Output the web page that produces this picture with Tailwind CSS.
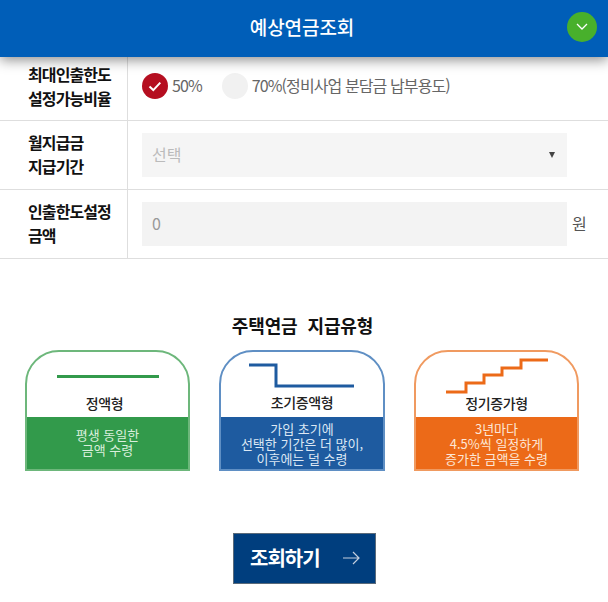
<!DOCTYPE html>
<html lang="ko">
<head>
  <meta charset="UTF-8" />
  <title>예상연금조회</title>
  <meta name="viewport" content="width=device-width, initial-scale=1" />
  <script src="https://cdn.jsdelivr.net/npm/@tailwindcss/browser@4"></script>
</head>
<body class="bg-white font-['Noto_Sans_CJK_KR','Noto_Sans',sans-serif] w-[608px] h-[602px] overflow-hidden">
  <!-- header -->
  <header class="relative z-10 h-[57px] bg-[#005eb8] flex items-center justify-center shadow-[0_3px_12px_rgba(0,0,0,0.45)]">
    <h1 class="text-white text-[19px] font-medium tracking-[-0.1px] pr-[4px] pb-[3px]">예상연금조회</h1>
    <button class="absolute left-[567px] top-[12px] w-[30px] h-[30px] rounded-full bg-[#48b02c] flex items-center justify-center">
      <svg width="12" height="8" viewBox="0 0 12 8" fill="none" stroke="#fff" stroke-width="1.3"><path d="M1 1l5 5 5-5" /></svg>
    </button>
  </header>

  <!-- form rows -->
  <div class="-mt-[5px]">
    <div class="flex h-[69px] border-b border-[#dedede]">
      <div class="w-[128px] shrink-0 border-r border-[#dedede] pl-[28px] pb-[1px] flex flex-col justify-center text-[16px] leading-[24px] font-bold text-[#111] tracking-[-0.9px]">
        <span>최대인출한도</span>
        <span>설정가능비율</span>
      </div>
      <div class="flex items-center pl-[14px] text-[16px] text-[#666] tracking-[-0.9px]">
        <span class="w-[26px] h-[26px] rounded-full bg-[#b50e20] flex items-center justify-center">
          <svg width="14" height="11" viewBox="0 0 14 11" fill="none" stroke="#fff" stroke-width="2"><path d="M1.5 5.5l3.8 3.6 7-7.5" /></svg>
        </span>
        <span class="ml-[4px] pb-[2px]">50%</span>
        <span class="ml-[20px] w-[26px] h-[26px] rounded-full bg-[#f1f1f1]"></span>
        <span class="ml-[4px] pb-[2px]">70%(정비사업 분담금 납부용도)</span>
      </div>
    </div>

    <div class="flex h-[69px] border-b border-[#dedede]">
      <div class="w-[128px] shrink-0 border-r border-[#dedede] pl-[28px] pb-[2px] flex flex-col justify-center text-[16px] leading-[24px] font-bold text-[#111] tracking-[-0.9px]">
        <span>월지급금</span>
        <span>지급기간</span>
      </div>
      <div class="flex items-center pl-[14px]">
        <div class="w-[425px] h-[44px] bg-[#f5f5f5] flex items-center justify-between pl-[10px] pr-[12px] text-[16px] text-[#bbb]">
          <span class="pb-[2px]">선택</span>
          <span class="w-0 h-0 border-x-[3px] border-x-transparent border-t-[6px] border-t-[#444]"></span>
        </div>
      </div>
    </div>

    <div class="flex h-[69px] border-b border-[#dedede]">
      <div class="w-[128px] shrink-0 border-r border-[#dedede] pl-[28px] pb-[2px] flex flex-col justify-center text-[16px] leading-[24px] font-bold text-[#111] tracking-[-0.9px]">
        <span>인출한도설정</span>
        <span>금액</span>
      </div>
      <div class="flex items-center pl-[14px]">
        <div class="w-[425px] h-[44px] bg-[#f3f3f3] flex items-center pl-[10px] pb-[2px] text-[16px] text-[#999]">0</div>
        <span class="ml-[5px] pb-[2px] text-[16px] text-[#555]">원</span>
      </div>
    </div>
  </div>

  <!-- pension types -->
  <h2 class="mt-[54px] text-center text-[18px] leading-[24px] font-bold text-[#111] tracking-[-0.1px] pr-[3px]">주택연금&nbsp; 지급유형</h2>

  <div class="mt-[13px] flex pl-[25px] gap-[29px]">
    <div class="w-[165px] h-[121px] flex flex-col rounded-t-[34px] border-2 border-[#6db77b] overflow-hidden">
      <div class="h-[65px] flex flex-col items-center">
        <svg class="mt-[17px]" width="104" height="16" viewBox="0 0 104 16" fill="none" stroke="#329a4b" stroke-width="3"><path d="M1 7.5h102" /></svg>
        <span class="mt-[8px] pr-[6px] text-[14px] leading-[20px] font-medium text-[#222] tracking-[-0.4px]">정액형</span>
      </div>
      <div class="flex-1 bg-[#329a4b] text-[#d9efdc] text-[13px] leading-[15px] text-center flex flex-col items-center justify-center pb-[3px]">
        <span>평생 동일한</span>
        <span>금액 수령</span>
      </div>
    </div>

    <div class="w-[166px] h-[121px] flex flex-col rounded-t-[34px] border-2 border-[#5f8fc4] overflow-hidden">
      <div class="h-[65px] flex flex-col items-center">
        <svg class="mt-[11px]" width="108" height="26" viewBox="0 0 108 26" fill="none" stroke="#1e5ba0" stroke-width="3"><path d="M1 2h27v21h78" /></svg>
        <span class="mt-[3px] text-[14px] leading-[20px] font-medium text-[#222] tracking-[-0.4px]">초기증액형</span>
      </div>
      <div class="flex-1 bg-[#1e5ba0] text-[#dce8f4] text-[13px] leading-[15px] text-center flex flex-col items-center justify-center">
        <span>가입 초기에</span>
        <span>선택한 기간은 더 많이,</span>
        <span>이후에는 덜 수령</span>
      </div>
    </div>

    <div class="w-[165px] h-[121px] flex flex-col rounded-t-[34px] border-2 border-[#f09a60] overflow-hidden">
      <div class="h-[65px] flex flex-col items-center">
        <svg class="mt-[6px]" width="104" height="36" viewBox="0 0 104 36" fill="none" stroke="#ec6a18" stroke-width="3"><path d="M1 34h20v-9h18v-8h18v-7h19v-8h27" /></svg>
        <span class="-mt-[1px] text-[14px] leading-[20px] font-medium text-[#222] tracking-[-0.4px]">정기증가형</span>
      </div>
      <div class="flex-1 bg-[#ec6a18] text-[#fde6d6] text-[13px] leading-[15px] text-center flex flex-col items-center justify-center">
        <span>3년마다</span>
        <span>4.5%씩 일정하게</span>
        <span>증가한 금액을 수령</span>
      </div>
    </div>
  </div>

  <div class="mt-[62px] flex justify-center">
    <button class="w-[143px] h-[51px] ml-[1px] bg-[#003e7e] border border-[#5a6a7a] flex items-center justify-between pl-[16px] pr-[15px] text-white text-[20px] font-bold tracking-[-1px] pb-[2px]">
      <span>조회하기</span>
      <svg width="17" height="14" viewBox="0 0 17 14" fill="none" stroke="#c3cede" stroke-width="1.2"><path d="M0 7h16M10 1l6 6-6 6" /></svg>
    </button>
  </div>
</body>
</html>
